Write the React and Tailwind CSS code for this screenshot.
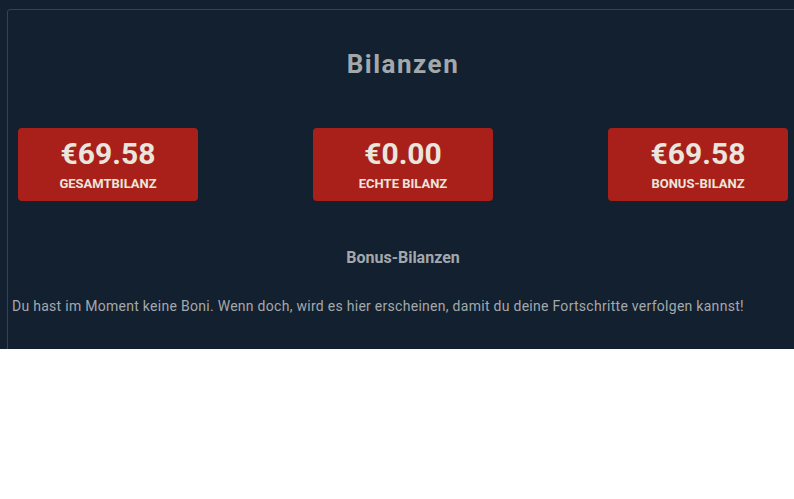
export default function App() {
  const balances = [
    { amount: "€69.58", label: "Gesamtbilanz" },
    { amount: "€0.00", label: "Echte Bilanz" },
    { amount: "€69.58", label: "Bonus-Bilanz" },
  ];

  return (
    <div className="h-[349px] overflow-hidden bg-[#132030] pl-[7px] pt-[9px]" style={{ fontFamily: "Roboto, 'Liberation Sans', sans-serif" }}>
      {/* Balances panel */}
      <div className="w-[792px] h-[400px] rounded-tl-[3px] border border-[#364352] px-[3px]">
        <h2 className="mt-[41px] text-center text-[26px] font-bold leading-none tracking-[1.5px] text-[#a3a9ab]">Bilanzen</h2>

        <div className="mx-[7px] mt-[51px] flex justify-between">
          {balances.map((b) => (
            <div key={b.label} className="flex h-[73px] w-[180px] flex-col items-center rounded-[4px] bg-[#a9201a] pt-[11px]">
              <span className="text-[30px] font-bold leading-none text-[#ebe6dd]">{b.amount}</span>
              <span className="mt-[8px] text-[13px] font-bold uppercase leading-none text-[#ebe6dd]">{b.label}</span>
            </div>
          ))}
        </div>

        <h3 className="mt-[49px] text-center text-[16px] font-bold leading-none text-[#a3a9ab]">Bonus-Bilanzen</h3>
        <p className="mt-[33px] pl-px text-[14px] leading-none tracking-[0.28px] text-[#a3a9ab]">
          Du hast im Moment keine Boni. Wenn doch, wird es hier erscheinen, damit du deine Fortschritte verfolgen kannst!
        </p>
      </div>
    </div>
  );
}
